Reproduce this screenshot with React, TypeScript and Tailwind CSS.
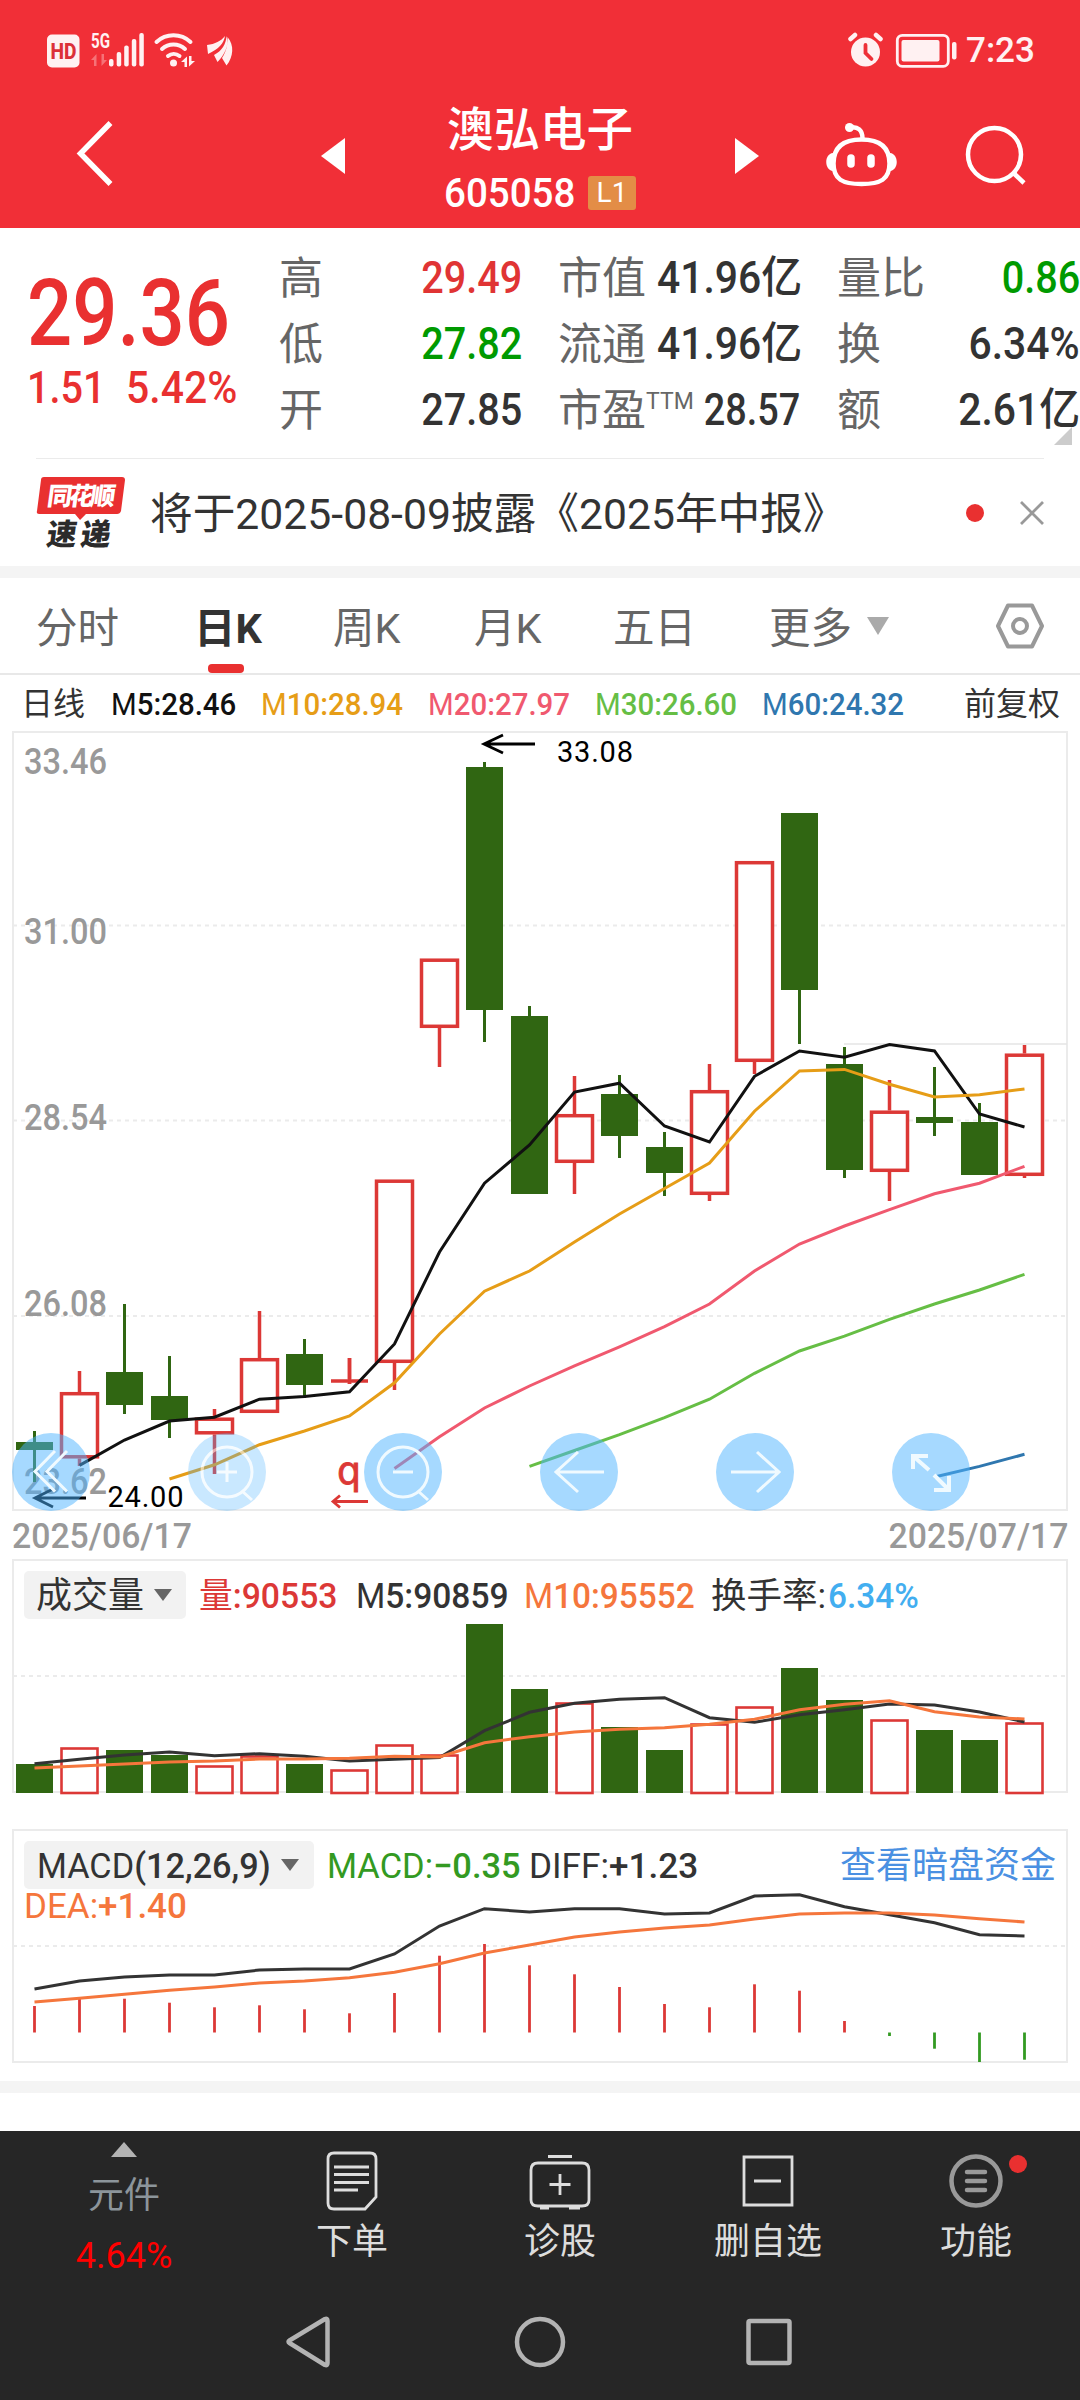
import React from 'react';

type Candle = [boolean, number, number, number, number];

// up, body top, body bottom, wick top, wick bottom
const candles: Candle[] = [
  [false, 1442, 1450, 1431, 1482],
  [true, 1392, 1458.5, 1371, 1466],
  [false, 1372, 1405, 1304, 1414],
  [false, 1396, 1420, 1356, 1438],
  [true, 1417.5, 1434.5, 1409, 1474],
  [true, 1358, 1413, 1311, 1413],
  [false, 1354, 1385, 1339, 1398],
  [true, 1379, 1383, 1358, 1384],
  [true, 1179.5, 1363, 1179.5, 1390],
  [true, 958.5, 1028, 958.5, 1067],
  [false, 767, 1010, 762, 1042],
  [false, 1016, 1194, 1006, 1194],
  [true, 1114, 1163, 1076, 1194],
  [false, 1094, 1136, 1075, 1158],
  [false, 1147, 1173, 1132, 1196],
  [true, 1090, 1195, 1064, 1201],
  [true, 861, 1062, 861, 1074],
  [false, 813, 990, 813, 1044],
  [false, 1064, 1170, 1047, 1178],
  [true, 1110.5, 1172, 1080, 1201],
  [false, 1117, 1123, 1067, 1136],
  [false, 1122, 1175, 1103, 1175],
  [true, 1053.5, 1176, 1045, 1178],
];

const averages = [
  { start: 1, color: '#111111', ys: [1465.4, 1440, 1421, 1417.2, 1399.2, 1396.5, 1391.8, 1344, 1252, 1183.2, 1145, 1092, 1083.2, 1126, 1142, 1076.3, 1051, 1057.2, 1044.5, 1051, 1114, 1127] },
  { start: 3, color: '#e69d17', ys: [1479, 1464.8, 1444.7, 1431, 1416, 1382.8, 1334, 1291.2, 1271, 1242, 1214, 1188.5, 1163, 1111.2, 1071, 1069.4, 1084.2, 1097, 1094.8, 1089] },
  { start: 8, color: '#f0596f', ys: [1468.5, 1436.8, 1408, 1386, 1365.8, 1346.8, 1326.7, 1304, 1271, 1244, 1226, 1209.7, 1193.8, 1183.2, 1166.3] },
  { start: 11, color: '#66be45', ys: [1466.4, 1450.5, 1434.7, 1417.7, 1399.2, 1373.3, 1351, 1336.2, 1319.3, 1304, 1290, 1274.3] },
  { start: 20, color: '#2f77af', ys: [1477, 1466.4, 1454.3] },
];

const volumes = [1764, 1747, 1750, 1755, 1765, 1755, 1764, 1769, 1744, 1754, 1624, 1689, 1702, 1727, 1750, 1723, 1706, 1668, 1700, 1719, 1730, 1740, 1722];
const volM5 = [1763.7, 1759.3, 1755, 1752, 1755.7, 1753.7, 1756.3, 1761, 1759.3, 1757.5, 1730.7, 1712.3, 1703.3, 1699.3, 1697.7, 1717.7, 1722.3, 1714.7, 1709.7, 1704, 1705, 1712, 1722];
const volM10 = [1768, 1766, 1764, 1762, 1761, 1759, 1759, 1758.3, 1756.3, 1757, 1742.7, 1736.7, 1732, 1729.3, 1727.7, 1724.3, 1719.3, 1709.7, 1704.3, 1700.7, 1711.7, 1717, 1719];

const diff = [1989, 1981, 1977, 1975, 1975, 1970, 1969, 1969, 1954, 1926, 1908.7, 1912, 1908.7, 1908.7, 1914, 1913, 1896, 1894.7, 1906.7, 1914.7, 1922.7, 1934.7, 1936];
const dea = [2002, 1998.3, 1994.3, 1990.3, 1987, 1983, 1981, 1977.7, 1972.3, 1963.7, 1953, 1945, 1937, 1932, 1928, 1925, 1919, 1914, 1913, 1913, 1915, 1918.7, 1922];
const macd = [2006, 1998.7, 1998.7, 2002.7, 2007.3, 2005.3, 2009.3, 2013.3, 1993, 1955.7, 1944, 1965.3, 1974.3, 1987, 2004, 2007.3, 1984.3, 1990.7, 2021, 2036, 2048.7, 2062, 2059.7];

const cx = (i: number) => 34.5 + 45 * i;
const line = (ys: number[], start = 0) => ys.map((y, i) => `${cx(i + start)},${y}`).join(' ');

const RED = '#dc3836';
const GREEN = '#306612';

const Num: React.FC<{ children: React.ReactNode; className?: string }> = ({ children, className = '' }) => (
  <span className={`inline-block whitespace-nowrap font-medium ${className}`}>{children}</span>
);

// Thin name followed by a heavier figure, as the indicator rows print them
const Reading: React.FC<{ name: string; value: string; className?: string }> = ({ name, value, className = '' }) => (
  <span className={`inline-block origin-left whitespace-nowrap ${className}`}>
    {name}<span className="font-medium">{value}</span>
  </span>
);

const StatusBar = () => (
  <div className="flex h-[100px] items-center justify-between pl-[47px] pr-[49px] text-[#fff1f2]">
    <svg className="h-[40px] w-[190px]" viewBox="47 30 190 40" fill="currentColor">
      <rect x="47" y="34.500" width="32.5" height="33" rx="5" />
      <text x="50.500" y="58.500" fontSize="22" fontWeight="800" fill="#dc3038" textLength="26" lengthAdjust="spacingAndGlyphs">HD</text>
      <text x="91" y="48" fontSize="20.5" fontWeight="700" textLength="19" lengthAdjust="spacingAndGlyphs">5G</text>
      <path d="M91 60l5.5-6v12h-2.5v-6zM107 60l-5.5 6v-12h2.5v6z" opacity=".35" />
      <rect x="109" y="59" width="4.5" height="7.5" rx="2" />
      <rect x="116.700" y="52" width="4.500" height="14.500" rx="2" />
      <rect x="124.200" y="45.500" width="4.500" height="21" rx="2" />
      <rect x="131.800" y="39" width="4.500" height="27.500" rx="2" />
      <rect x="139.300" y="33" width="4.500" height="33.500" rx="2" />
      <g fill="none" stroke="currentColor" strokeWidth="4" strokeLinecap="round">
        <path d="M156.500 42a25 25 0 0 1 34 0" />
        <path d="M162 49a17 17 0 0 1 23 0" />
        <path d="M168 56a9 9 0 0 1 11.500 0" />
      </g>
      <circle cx="173.500" cy="63" r="3.500" />
      <path d="M181 62l6-5.500v10.500h-2.500v-5zM195 61l-6 5.500V56h2.500v5z" />
      <path d="M207 45c8-1 14-4 18-9-1 7-6 13-17 18zM214 55c8-4 12-11 12.500-19 3 9-2 19-9 26zM222 58c4-6 6-13 5.500-21 7 8 6 20-1 28.500z" />
    </svg>
    <div className="flex items-center">
      <svg className="mr-[12px] h-[36px] w-[36px]" viewBox="847 33 36 36">
        <circle cx="865.500" cy="53" r="14.500" fill="currentColor" />
        <path d="M865.500 46v8l6 6" fill="none" stroke="#ee3038" strokeWidth="3.800" strokeLinecap="round" />
        <path d="M850.500 40l4.500-4M880.500 40l-4.500-4" stroke="currentColor" strokeWidth="4.500" strokeLinecap="round" />
      </svg>
      <svg className="mr-[9px] h-[36px] w-[62px]" viewBox="895 31 62 36">
        <rect x="897.300" y="34.300" width="51" height="31" rx="5" fill="none" stroke="currentColor" strokeWidth="2.800" />
        <rect x="901.500" y="39" width="38" height="21.500" rx="2" fill="currentColor" />
        <rect x="952" y="41" width="4.500" height="17.500" rx="2" fill="currentColor" />
      </svg>
      <span className="w-[65px] text-[35px] font-medium leading-none">7:23</span>
    </div>
  </div>
);

const Header = () => (
  <header className="h-[228px] shrink-0 bg-[#f12f37] text-white">
    <StatusBar />
    <div className="flex h-[128px] items-start">
      <svg className="ml-[76px] mt-[20px] h-[70px] w-[40px] shrink-0" viewBox="76 120 40 70" fill="none" stroke="#fff" strokeWidth="5.500">
        <path d="M110.500 127L80.500 157.500l30 30.500" transform="translate(0 -4)" />
      </svg>
      <svg className="ml-[205px] mt-[38px] h-[36px] w-[24px] shrink-0" viewBox="0 0 24 36"><path d="M24 0v36L0 18z" fill="#fff" /></svg>
      <div className="flex w-[390px] shrink-0 flex-col items-center">
        <div className="mt-[4px] text-[46.500px] font-medium leading-[52px]">澳弘电子</div>
        <div className="mt-[13px] flex w-[192px] items-center justify-between">
          <Num className="w-[131px] origin-left scale-x-[.94] text-[41px] leading-[48px]">605058</Num>
          <span className="h-[34px] w-[48px] rounded-[3px] bg-[#e38d46] text-center text-[28px] leading-[34px]">L1</span>
        </div>
      </div>
      <svg className="mt-[38px] h-[36px] w-[24px] shrink-0" viewBox="0 0 24 36"><path d="M0 0v36l24-18z" fill="#fff" /></svg>
      <svg className="ml-[65px] mt-[20px] h-[72px] w-[74px] shrink-0" viewBox="824 120 74 72" fill="none" stroke="#fff" strokeWidth="4.500">
        <path d="M861.500 139.500c17 0 28 7 28 24 0 16-9 20.500-28 20.500s-28-4.500-28-20.500c0-17 11-24 28-24z" />
        <path d="M850 127.500c8-1.500 12.500 3 12.500 11" />
        <circle cx="849.500" cy="127.500" r="4.500" fill="#fff" stroke="none" />
        <path d="M833 153c-9 1-9 17 0 18zM890 153c9 1 9 17 0 18z" fill="#fff" stroke="none" />
        <path d="M851 158v6M871 158v6" strokeWidth="7.500" strokeLinecap="round" />
      </svg>
      <svg className="ml-[65px] mt-[22px] h-[66px] w-[66px] shrink-0" viewBox="963 122 66 66" fill="none" stroke="#fff" strokeWidth="4.500">
        <circle cx="994.500" cy="154.500" r="26.500" />
        <path d="M1013.500 173l10.500 10" />
      </svg>
    </div>
  </header>
);

const quoteLabel = 'relative top-[2px] -ml-[1px] whitespace-nowrap text-[44px] leading-[66px] text-[#666]';
const quoteValue = 'relative top-[1px] origin-right text-[44px] leading-[66px]';

const Quote = () => (
  <section className="relative flex h-[230px] shrink-0 pt-[16px]">
    <div className="w-[280px] shrink-0 pl-[27px] text-[#e93030]">
      <div className="mt-[20px] h-[100px] origin-left scale-x-[.865] text-[92px] font-medium leading-[100px]">29.36</div>
      <div className="mt-[-9px] flex h-[66px]">
        <Num className="w-[99px] origin-left scale-x-90 text-[44px] leading-[67px]">1.51</Num>
        <Num className="origin-left scale-x-[.93] text-[44px] leading-[67px]">5.42%</Num>
      </div>
    </div>
    <div className="w-[242px] shrink-0">
      <div className="flex justify-between"><span className={quoteLabel}>高</span><Num className={`${quoteValue} scale-x-90 text-[#e03434]`}>29.49</Num></div>
      <div className="flex justify-between"><span className={quoteLabel}>低</span><Num className={`${quoteValue} scale-x-90 text-[#009a00]`}>27.82</Num></div>
      <div className="flex justify-between"><span className={quoteLabel}>开</span><Num className={`${quoteValue} scale-x-90 text-[#333]`}>27.85</Num></div>
    </div>
    <div className="ml-[37px] w-[241px] shrink-0 text-[#333]">
      <div className="flex justify-between"><span className={quoteLabel}>市值</span><Num className={`${quoteValue} scale-x-[.93]`}>41.96亿</Num></div>
      <div className="flex justify-between"><span className={quoteLabel}>流通</span><Num className={`${quoteValue} scale-x-[.93]`}>41.96亿</Num></div>
      <div className="flex justify-between">
        <span className={`${quoteLabel} flex`}>市盈<span className="-mt-[9px] h-[66px] text-[23px]">TTM</span></span>
        <Num className={`${quoteValue} -ml-[30px] scale-x-[.86]`}>28.57</Num>
      </div>
    </div>
    <div className="ml-[38px] w-[242px] shrink-0 text-[#333]">
      <div className="flex justify-between"><span className={quoteLabel}>量比</span><Num className={`${quoteValue} scale-x-90 text-[#009a00]`}>0.86</Num></div>
      <div className="flex justify-between"><span className={quoteLabel}>换</span><Num className={`${quoteValue} scale-x-[.93]`}>6.34%</Num></div>
      <div className="flex justify-between"><span className={quoteLabel}>额</span><Num className={`${quoteValue} scale-x-[.93]`}>2.61亿</Num></div>
    </div>
    <svg className="absolute bottom-[13px] right-[8px] h-[18px] w-[18px]" viewBox="0 0 18 18"><path d="M18 0v18H0z" fill="#ccc" /></svg>
  </section>
);

const Notice = () => (
  <section className="mx-[36px] flex h-[108px] shrink-0 items-center border-t border-[#ebebeb]">
    <svg className="h-[74px] w-[90px] overflow-visible" viewBox="36 475 90 74">
      <path d="M44 476h78q3 0 3 3l-4 31q-1 3-4 3H86l-6 6-5-6H39q-3 0-2-3l4-31q0-3 3-3z" fill="#e93030" />
      <text x="47" y="504" fontSize="25" fontWeight="900" fill="#fff" textLength="68" transform="skewX(-8) translate(70 0)">同花顺</text>
      <text x="47" y="544.500" fontSize="30" fontWeight="900" fill="#2b2b2b" textLength="64" transform="skewX(-8) translate(75 0)">速递</text>
    </svg>
    <span className="ml-[24px] whitespace-nowrap pt-[3px] text-[42.700px] leading-none text-[#333]">将于2025-08-09披露《2025年中报》</span>
    <span className="ml-auto h-[18px] w-[18px] rounded-full bg-[#e93030]" />
    <svg className="ml-[36px] h-[24px] w-[24px]" viewBox="0 0 24 24" stroke="#999" strokeWidth="2.800"><path d="M1 1l22 22M23 1L1 23" /></svg>
  </section>
);

const tabs = [
  { name: '分时', width: 'w-[158px]' },
  { name: '日K', width: 'w-[139px]', active: true },
  { name: '周K', width: 'w-[141px]' },
  { name: '月K', width: 'w-[139px]' },
  { name: '五日', width: 'w-[156px]' },
  { name: '更多', width: 'w-[97px]' },
];

const Tabs = () => (
  <nav className="flex h-[97px] shrink-0 border-b-2 border-[#e8e8e8] pl-[36px] text-[41.500px] leading-[101px] text-[#666]">
    {tabs.map((tab) => (
      <div key={tab.name} className={`relative shrink-0 ${tab.width} ${tab.active ? 'font-bold text-[#333]' : ''}`}>
        {tab.name}
        {tab.active && <span className="absolute bottom-0 left-[14px] h-[9px] w-[36px] rounded-[4px] bg-[#e93030]" />}
      </div>
    ))}
    <svg className="mt-[39px] h-[18px] w-[24px]" viewBox="0 0 24 18"><path d="M1 0h22L12 18z" fill="#aaa" /></svg>
    <svg className="ml-[105px] mt-[23px] h-[50px] w-[50px]" viewBox="-25 -25 50 50" fill="none" stroke="#999" strokeWidth="4">
      <path d="M-12-20.500h24L22 0 12 20.500h-24L-22 0z" strokeLinejoin="round" />
      <circle r="7" />
    </svg>
  </nav>
);

const legend = [
  { value: '5:28.46', style: 'w-[150px] text-[#111]' },
  { value: '10:28.94', style: 'w-[167px] text-[#e69d17]' },
  { value: '20:27.97', style: 'w-[167px] text-[#f0596f]' },
  { value: '30:26.60', style: 'w-[167px] text-[#66be45]' },
  { value: '60:24.32', style: 'w-[180px] text-[#2f77af]' },
];

const scaleLabels: [string, number][] = [['33.46', 773.5], ['31.00', 944], ['28.54', 1129.5], ['26.08', 1315.5], ['23.62', 1493.5]];

const toolButtons = [
  <path key="first" d="M43 18L23 38.500 43 58.500M55 18L35 38.500 55 58.500" />,
  <path key="in" d="M39 29v20M29 39h20M54 58l10 9M64 39a25 25 0 1 1-50 0 25 25 0 0 1 50 0z" />,
  <path key="out" d="M29 39h20M54 58l10 9M64 39a25 25 0 1 1-50 0 25 25 0 0 1 50 0z" />,
  <path key="prev" d="M64 39H16M38 19L16 39l22 20" />,
  <path key="next" d="M15 39h48M41 19l22 20-22 20" />,
  <path key="full" strokeWidth="4" d="M21 36V23h15M21 23l16 14M57 43v14H42M57 57L42 42" />,
];

const KChart = () => (
  <section className="shrink-0">
    <div className="flex h-[56px] pl-[21px] pr-[20px] text-[32px] leading-[59px] text-[#333]">
      <span className="w-[90px]">日线</span>
      {legend.map((item) => (
        <span key={item.value} className={`shrink-0 ${item.style}`}><Reading name="M" value={item.value} className="scale-x-[.92]" /></span>
      ))}
      <span className="ml-auto shrink-0">前复权</span>
    </div>
    <div className="relative">
      <svg className="block h-[780px] w-[1080px] overflow-visible" viewBox="0 731 1080 780">
        <rect x="13" y="732" width="1054" height="778" fill="#fff" stroke="#ebebeb" strokeWidth="2" />
        {[925.5, 1120.5, 1316].map((y) => (
          <path key={y} d={`M13 ${y}H1067`} stroke="#ebebeb" strokeWidth="2" strokeDasharray="4 4" />
        ))}
        <path d="M844 1044H1067" stroke="#e4e4e4" strokeWidth="1.500" />
        {scaleLabels.map(([label, y]) => (
          <text key={label} x="24" y={y} fontSize="36.500" fontWeight="500" fill="#999" textLength="83" lengthAdjust="spacingAndGlyphs">{label}</text>
        ))}
        {candles.map(([up, top, bottom, high, low], i) => (
          up ? (
            <g key={i} fill="none" stroke={RED} strokeWidth="3.500">
              <path d={`M${cx(i)} ${high}V${top}M${cx(i)} ${bottom}V${low}`} />
              {bottom - top < 5
                ? <path d={`M${cx(i) - 18.5} ${(top + bottom) / 2}h37M${cx(i)} ${high}V${low}`} />
                : <rect x={cx(i) - 18} y={top + 1.7} width="36" height={bottom - top - 3.4} fill="#fff" />}
            </g>
          ) : (
            <g key={i} fill={GREEN}>
              <rect x={cx(i) - 1.5} y={high} width="3" height={low - high} />
              <rect x={cx(i) - 18.5} y={top} width="37" height={bottom - top} />
            </g>
          )
        ))}
        {averages.map((ma) => (
          <polyline key={ma.color} points={line(ma.ys, ma.start)} fill="none" stroke={ma.color} strokeWidth="3" />
        ))}
        <path d="M535 744h-50M503 735l-19 9 19 9M86 1498H35M53 1489l-18 9 18 9" fill="none" stroke="#000" strokeWidth="2.800" />
        <text x="557" y="761.500" fontSize="29" textLength="76">33.08</text>
        <text x="107.500" y="1506.500" fontSize="29" textLength="76">24.00</text>
        <text x="337" y="1484" fontSize="38" fill={RED} stroke={RED} strokeWidth=".8" className="font-['DejaVu_Sans']">q</text>
        <path d="M368 1501.500h-35M340 1495.500l-7 6 7 6" fill="none" stroke={RED} strokeWidth="2.800" />
      </svg>
      <div className="absolute bottom-0 left-[12px] flex gap-[98px]">
        {toolButtons.map((icon, i) => (
          <svg key={i} className={`h-[78px] w-[78px] rounded-full bg-[#4cb3ff]/50 ${i === 1 ? 'opacity-60' : ''}`} viewBox="0 0 78 78" fill="none" stroke="#f0faff" strokeWidth="3">{icon}</svg>
        ))}
      </div>
    </div>
    <div className="flex h-[48px] justify-between px-[12px] text-[35px] leading-[51px] text-[#999]">
      <Num className="origin-left scale-x-[.965]">2025/06/17</Num>
      <Num className="origin-right scale-x-[.965]">2025/07/17</Num>
    </div>
  </section>
);

const Caret = () => (
  <svg className="h-[12px] w-[18px]" viewBox="0 0 18 12"><path d="M0 0h18L9 12z" fill="#666" /></svg>
);

const Volume = () => (
  <section className="relative h-[270px] shrink-0">
    <svg className="absolute left-0 top-0 h-[236px] w-[1080px]" viewBox="0 1559 1080 236" fill="none">
      <rect x="13" y="1560" width="1054" height="232" stroke="#ebebeb" strokeWidth="2" />
      <path d="M13 1676H1067" stroke="#ebebeb" strokeWidth="2" strokeDasharray="4 4" />
      {volumes.map((y, i) => (
        candles[i][0]
          ? <rect key={i} x={cx(i) - 18} y={y + 1.5} width="36" height={1791.5 - y} fill="#fff" stroke={RED} strokeWidth="2.600" />
          : <rect key={i} x={cx(i) - 18.5} y={y} width="37" height={1793 - y} fill={GREEN} />
      ))}
      <polyline points={line(volM5)} stroke="#333" strokeWidth="3" />
      <polyline points={line(volM10)} stroke="#f5763c" strokeWidth="3" />
    </svg>
    <div className="relative flex pl-[24px] pt-[12px] text-[35.500px] leading-[51px] text-[#333]">
      <div className="mr-[13px] flex h-[48px] w-[162px] items-center rounded-[5px] bg-[#f2f2f2] pl-[12px]">
        <span className="mr-[10px] pt-[3px] text-[36px]">成交量</span><Caret />
      </div>
      <span className="w-[157px] text-[#dc3836]"><Reading name="量" value=":90553" className="scale-x-[.95]" /></span>
      <span className="w-[168px]"><Reading name="M" value="5:90859" className="scale-x-[.945]" /></span>
      <span className="w-[187px] text-[#f5763c]"><Reading name="M" value="10:95552" className="scale-x-[.94]" /></span>
      <span className="w-[117px]">换手率:</span>
      <Num className="origin-left scale-x-[.94] text-[#42aef0]">6.34%</Num>
    </div>
  </section>
);

const Macd = () => (
  <section className="relative h-[252px] shrink-0">
    <svg className="absolute left-0 top-0 h-[235px] w-[1080px]" viewBox="0 1829 1080 235" fill="none">
      <rect x="13" y="1830" width="1054" height="232" stroke="#ebebeb" strokeWidth="2" />
      <path d="M13 1946H1067" stroke="#ebebeb" strokeWidth="2" strokeDasharray="4 4" />
      {macd.map((y, i) => (
        <path key={i} d={`M${cx(i)} 2032.5V${y}`} stroke={y > 2032 ? '#339a22' : RED} strokeWidth="2.800" />
      ))}
      <polyline points={line(diff)} stroke="#333" strokeWidth="3" />
      <polyline points={line(dea)} stroke="#f5763c" strokeWidth="3" />
    </svg>
    <div className="relative flex pl-[24px] pr-[24px] pt-[12px] text-[35.500px] leading-[51px] text-[#333]">
      <div className="mr-[13px] flex h-[48px] w-[290px] items-center rounded-[5px] bg-[#f2f2f2] pl-[13px]">
        <span className="w-[244px] pt-[2px]"><Reading name="MACD" value="(12,26,9)" className="scale-x-[.965]" /></span><Caret />
      </div>
      <span className="w-[202px] text-[#339a22]"><Reading name="MACD:" value="−0.35" className="scale-x-[.97]" /></span>
      <Reading name="DIFF:" value="+1.23" className="scale-x-[.99]" />
      <span className="ml-auto text-[36px] text-[#4a90e2]">查看暗盘资金</span>
    </div>
    <div className="relative -mt-[3px] pl-[24px] text-[35.500px] leading-[34px] text-[#f5763c]"><Reading name="DEA:" value="+1.40" className="scale-x-[.985]" /></div>
  </section>
);

const actions = [
  {
    name: '下单',
    icon: <path d="M-18-28h36q6 0 6 6v38L13 28h-31q-6 0-6-6v-44q0-6 6-6zM-18-14h35M-18-6.500h35M-18 1.500h35M-18 9h24" />,
  },
  {
    name: '诊股',
    icon: <path d="M-22-18h44q7 0 7 7v30q0 6-7 6h-44q-7 0-7-6v-30q0-7 7-7zM-12-24.500h24M0-7v21M-10.500 3.500h21M-20 27h9M9 27h11" />,
  },
  { name: '删自选', icon: <path d="M-24-24h48v48h-48zM-14 0h27" /> },
  {
    name: '功能',
    icon: (
      <g stroke="#999" strokeWidth="4.500" strokeLinecap="round">
        <circle r="24.500" />
        <path d="M-9-9H9M-9 0H9M-9 9H9" />
      </g>
    ),
    dot: true,
  },
];

const BottomBar = () => (
  <footer className="mt-auto h-[269px] shrink-0 bg-[#262626] text-[#ddd]">
    <div className="flex h-[160px] text-[36px]">
      <div className="flex w-[248px] shrink-0 flex-col items-center">
        <svg className="mt-[11px] h-[15px] w-[26px]" viewBox="0 0 26 15"><path d="M13 0l13 15H0z" fill="#b3b3b3" /></svg>
        <span className="mt-[19px] leading-[40px] text-[#8c959b]">元件</span>
        <span className="mt-[20px] leading-[40px] text-[#f00]">4.64%</span>
      </div>
      {actions.map((action) => (
        <div key={action.name} className="relative flex w-[208px] shrink-0 flex-col items-center">
          <svg className="mt-[17px] h-[66px] w-[66px]" viewBox="-33 -33 66 66" fill="none" stroke="#ddd" strokeWidth="2.800">{action.icon}</svg>
          <span className="mt-[8px] leading-[40px]">{action.name}</span>
          {action.dot && <span className="absolute left-[137px] top-[24px] h-[18px] w-[18px] rounded-full bg-[#e93030]" />}
        </div>
      ))}
    </div>
    <div className="flex pt-[22px]">
      <svg className="ml-[283px] h-[58px] w-[50px]" viewBox="283 2313 50 58" fill="none" stroke="#b3b3b3" strokeWidth="4.500" strokeLinejoin="round"><path d="M289.500 2340.500L325 2319q2.500-1 2.500 2v42q0 3-2.500 2l-35.500-22q-2-1.200 0-2.500z" /></svg>
      <svg className="ml-[178px] h-[58px] w-[58px]" viewBox="-29 -29 58 58" fill="none" stroke="#b3b3b3" strokeWidth="4.500"><circle r="23" /></svg>
      <svg className="ml-[171px] h-[58px] w-[58px]" viewBox="-29 -29 58 58" fill="none" stroke="#b3b3b3" strokeWidth="4.500"><rect x="-20.500" y="-21" width="41" height="42" rx="1.500" /></svg>
    </div>
  </footer>
);

const App: React.FC = () => (
  <div className="flex h-[2400px] w-[1080px] flex-col overflow-hidden bg-white font-[Roboto,'Noto_Sans_CJK_SC',sans-serif]">
    <Header />
    <Quote />
    <Notice />
    <div className="h-[12px] shrink-0 bg-[#f4f4f4]" />
    <Tabs />
    <KChart />
    <Volume />
    <Macd />
    <div className="h-[12px] shrink-0 bg-[#f4f4f4]" />
    <BottomBar />
  </div>
);

export default App;
